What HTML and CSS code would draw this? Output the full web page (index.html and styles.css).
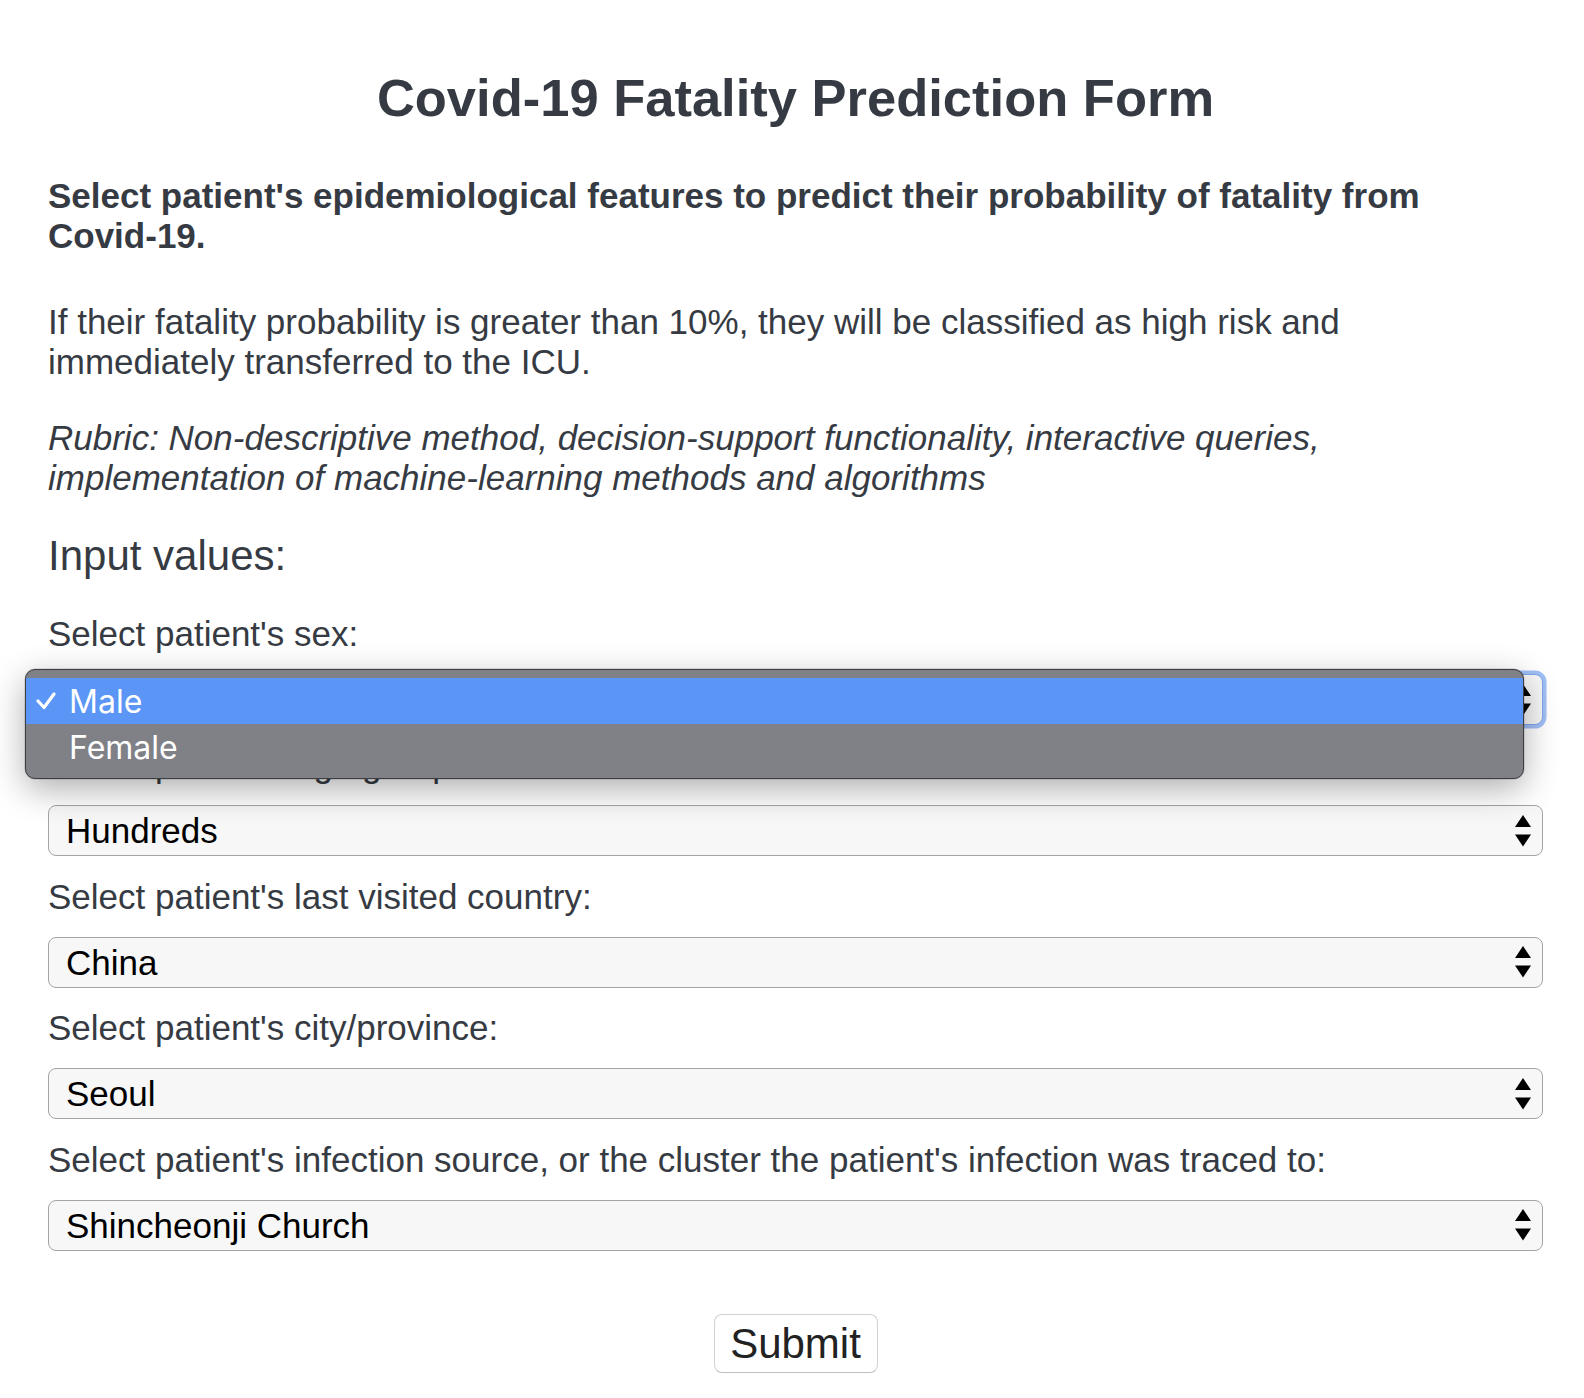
FILE: index.html
```html
<!DOCTYPE html>
<html lang="en">
<head>
<meta charset="utf-8">
<title>Covid-19 Fatality Prediction Form</title>
<link rel="stylesheet" href="styles.css">
</head>
<body>
<main class="page">
  <h1 class="title">Covid-19 Fatality Prediction Form</h1>
  <p class="lead">Select patient's epidemiological features to predict their probability of fatality from Covid-19.</p>
  <p class="text">If their fatality probability is greater than 10%, they will be classified as high risk and immediately transferred to the ICU.</p>
  <p class="text rubric">Rubric: Non-descriptive method, decision-support functionality, interactive queries, implementation of machine-learning methods and algorithms</p>
  <h3 class="section">Input values:</h3>
  <form class="form">
    <div class="field field-open">
      <label class="label">Select patient's sex:</label>
      <div class="select focused">
        <span class="value">Male</span>
        <svg class="arrows" width="16" height="32" viewBox="0 0 16 32"><polygon points="8,0 16,12 0,12" /><polygon points="0,19.5 16,19.5 8,31.5" /></svg>
      </div>
      <div class="menu">
        <div class="opt opt-active">
          <svg class="check" width="20" height="18" viewBox="0 0 20 18"><polyline points="2,9 8,15.5 18,2" /></svg>
          <span>Male</span>
        </div>
        <div class="opt"><span>Female</span></div>
      </div>
    </div>
    <div class="field">
      <label class="label">Select patient's age group:</label>
      <div class="select">
        <span class="value">Hundreds</span>
        <svg class="arrows" width="16" height="32" viewBox="0 0 16 32"><polygon points="8,0 16,12 0,12" /><polygon points="0,19.5 16,19.5 8,31.5" /></svg>
      </div>
    </div>
    <div class="field">
      <label class="label">Select patient's last visited country:</label>
      <div class="select">
        <span class="value">China</span>
        <svg class="arrows" width="16" height="32" viewBox="0 0 16 32"><polygon points="8,0 16,12 0,12" /><polygon points="0,19.5 16,19.5 8,31.5" /></svg>
      </div>
    </div>
    <div class="field">
      <label class="label">Select patient's city/province:</label>
      <div class="select">
        <span class="value">Seoul</span>
        <svg class="arrows" width="16" height="32" viewBox="0 0 16 32"><polygon points="8,0 16,12 0,12" /><polygon points="0,19.5 16,19.5 8,31.5" /></svg>
      </div>
    </div>
    <div class="field">
      <label class="label">Select patient's infection source, or the cluster the patient's infection was traced to:</label>
      <div class="select">
        <span class="value">Shincheonji Church</span>
        <svg class="arrows" width="16" height="32" viewBox="0 0 16 32"><polygon points="8,0 16,12 0,12" /><polygon points="0,19.5 16,19.5 8,31.5" /></svg>
      </div>
    </div>
    <div class="actions">
      <button type="button" class="submit">Submit</button>
    </div>
  </form>
</main>
</body>
</html>
```
FILE: styles.css
```css
html, body {
  margin: 0;
  padding: 0;
  background: #ffffff;
}

body {
  font-family: "Liberation Sans", Arial, Helvetica, sans-serif;
  color: #363b43;
  font-size: 35px;
  line-height: normal;
}

.page {
  padding: 67px 41px 0 48px;
}

.title {
  margin: 0 0 48px 0;
  font-size: 52.5px;
  font-weight: 700;
  text-align: center;
  line-height: normal;
}

.lead {
  margin: 0 26px 46px 0;
  font-weight: 700;
}

.text {
  margin: 0 26px 35.6px 0;
}

.rubric {
  font-style: italic;
  margin-bottom: 34px;
}

.section {
  margin: 0 0 34.5px 0;
  font-size: 42px;
  font-weight: 400;
  line-height: normal;
}

.form {
  margin: 0;
}

.field {
  display: flex;
  flex-direction: column;
}

.field-open {
  position: relative;
}

.label {
  display: block;
  margin-bottom: 20px;
}

.select {
  box-sizing: border-box;
  height: 51px;
  margin-bottom: 20.4px;
  display: flex;
  align-items: center;
  justify-content: space-between;
  padding: 0 11px 0 17px;
  background: #f7f7f7;
  border: 1.5px solid #a4a4a4;
  border-radius: 8px;
  color: #000;
}

.select.focused {
  border-color: #7fa6ea;
  box-shadow: 0 0 0 3.5px rgba(96, 148, 238, 0.6);
}

.value {
  font-size: 35px;
  line-height: 1;
}

.arrows {
  display: block;
  fill: #000;
}

.menu {
  position: absolute;
  left: -23px;
  top: 55px;
  width: 1499px;
  box-sizing: border-box;
  padding: 8px 0 8px 0;
  background: #7f8187;
  border: 1px solid #3c3d40;
  border-radius: 10px;
  box-shadow: 0 10px 34px rgba(0, 0, 0, 0.32), 0 0 0 0.5px rgba(0, 0, 0, 0.2);
  z-index: 5;
  font-family: Inter, "Liberation Sans", sans-serif;
  color: #ffffff;
}

.opt {
  height: 46px;
  display: flex;
  align-items: center;
  padding-left: 43px;
  font-size: 32px;
  position: relative;
}

.opt-active {
  background: #5b95f6;
}

.check {
  position: absolute;
  left: 10px;
  top: 14px;
  fill: none;
  stroke: #ffffff;
  stroke-width: 3.2;
  stroke-linecap: round;
  stroke-linejoin: round;
}

.actions {
  display: flex;
  justify-content: center;
  margin-top: 43px;
}

.submit {
  box-sizing: border-box;
  height: 59px;
  width: 164px;
  padding: 0;
  font-family: "Liberation Sans", Arial, sans-serif;
  font-size: 42px;
  color: #222;
  background: #ffffff;
  border: 1.5px solid #d2d2d2;
  border-bottom-color: #bdbdbd;
  border-radius: 8px;
  line-height: 1;
}
```
